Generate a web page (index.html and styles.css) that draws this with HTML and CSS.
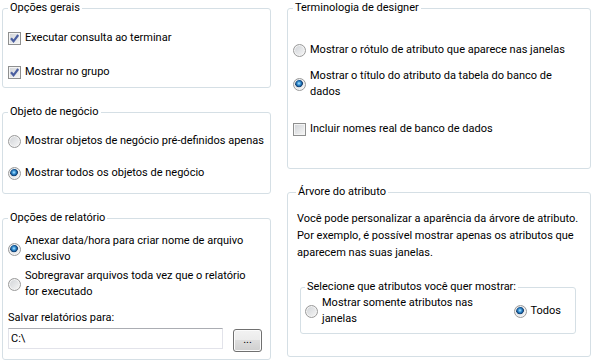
FILE: index.html
```html
<!DOCTYPE html>
<html lang="pt-BR">
<head>
    <meta charset="UTF-8">
    <title>Opções</title>
    <link rel="stylesheet" href="styles.css">
</head>
<body>

<div class="dialog">
    <div class="column">
        <fieldset class="group general">
            <legend>Opções gerais</legend>
            <label class="option first"><input type="checkbox" checked><span>Executar consulta ao terminar</span></label>
            <label class="option second"><input type="checkbox" checked><span>Mostrar no grupo</span></label>
        </fieldset>

        <fieldset class="group business">
            <legend>Objeto de negócio</legend>
            <label class="option first"><input type="radio" name="objetos"><span>Mostrar objetos de negócio pré-definidos apenas</span></label>
            <label class="option second"><input type="radio" name="objetos" checked><span>Mostrar todos os objetos de negócio</span></label>
        </fieldset>

        <fieldset class="group report">
            <legend>Opções de relatório</legend>
            <label class="option wrap first"><input type="radio" name="relatorio" checked><span>Anexar data/hora para criar nome de arquivo exclusivo</span></label>
            <label class="option wrap second"><input type="radio" name="relatorio"><span>Sobregravar arquivos toda vez que o relatório for executado</span></label>
            <div class="save-label">Salvar relatórios para:</div>
            <div class="path-row">
                <input type="text" class="path" value="C:\">
                <button class="browse">...</button>
            </div>
        </fieldset>
    </div>

    <div class="column">
        <fieldset class="group terms">
            <legend>Terminologia de designer</legend>
            <label class="option first"><input type="radio" name="termos"><span>Mostrar o rótulo de atributo que aparece nas janelas</span></label>
            <label class="option wrap second"><input type="radio" name="termos" checked><span>Mostrar o título do atributo da tabela do banco de dados</span></label>
            <label class="option third"><input type="checkbox"><span>Incluir nomes real de banco de dados</span></label>
        </fieldset>

        <fieldset class="group tree">
            <legend>Árvore do atributo</legend>
            <p class="note">Você pode personalizar a aparência da árvore de atributo. Por exemplo, é possível mostrar apenas os atributos que aparecem nas suas janelas.</p>
            <fieldset class="group inner">
                <legend>Selecione que atributos você quer mostrar:</legend>
                <div class="choice-row">
                    <label class="option wrap narrow"><input type="radio" name="arvore"><span>Mostrar somente atributos nas janelas</span></label>
                    <label class="option all"><input type="radio" name="arvore" checked><span>Todos</span></label>
                </div>
            </fieldset>
        </fieldset>
    </div>
</div>

</body>
</html>
```

FILE: styles.css
```css
body {
    margin: 0;
    background: #fff;
    color: #000;
    font-family: Roboto, "Open Sans", sans-serif;
    font-size: 11px;
    line-height: 16px;
}
.dialog {
    display: grid;
    grid-template-columns: 269px 304px;
    column-gap: 16px;
    padding: 0 0 0 2px;
}
.column { display: flex; flex-direction: column; }

.group {
    margin: 0;
    min-width: 0;
    padding: 0 7px 7px 5px;
    border: 1px solid #d5dfe5;
    border-radius: 3px;
}
.group legend { padding: 0 2px; }

.option {
    display: flex;
    align-items: center;
    gap: 4px;
    white-space: nowrap;
}
.option.wrap { white-space: normal; }
input[type="checkbox"], input[type="radio"] {
    appearance: none;
    flex: none;
    width: 13px;
    height: 13px;
    margin: 0;
    border: 1px solid #8e8f8f;
    background: linear-gradient(135deg, #cfd2d6, #f7f7f7);
    box-shadow: inset 0 0 0 1px #f4f4f4;
}
input[type="radio"] {
    border-color: #9a9a9a;
    border-radius: 50%;
}
input[type="radio"]:checked {
    background:
        radial-gradient(circle at 45% 40%, #bfe9ff 0, #4ba3e0 1.4px, #0e5596 3px, #1d3f6a 3.6px, rgba(29,63,106,0) 4.2px),
        linear-gradient(135deg, #cfd2d6, #f7f7f7);
}
input[type="checkbox"]:checked {
    background:
        url("data:image/svg+xml,%3Csvg xmlns='http://www.w3.org/2000/svg' width='11' height='11'%3E%3Cpath d='M2 5.3 L4.5 8.3 L9.2 2' fill='none' stroke='%234a5ea0' stroke-width='2.2'/%3E%3C/svg%3E") center no-repeat,
        linear-gradient(135deg, #cfd2d6, #f7f7f7);
}

/* Opções gerais */
.general { padding-top: 14px; }
.general .second { margin-top: 18px; }

/* Objeto de negócio */
.business { margin-top: 16px; padding-top: 13px; padding-bottom: 12px; }
.business .second { margin-top: 16px; }

/* Opções de relatório */
.report { margin-top: 16px; padding-top: 7px; padding-bottom: 7px; }
.report .wrap span { max-width: 224px; }
.report .second { margin-top: 3px; }
.save-label { margin-top: 10px; }
.path-row {
    display: flex;
    align-items: flex-start;
    gap: 10px;
    margin-top: 2px;
}
.path {
    width: 215px;
    height: 21px;
    box-sizing: border-box;
    margin: 0;
    padding: 0 2px;
    border: 1px solid #e2e3ea;
    border-top-color: #abadb3;
    font: inherit;
    color: #000;
    outline: none;
}
.browse {
    width: 29px;
    height: 23px;
    margin-top: 1px;
    padding: 0 0 2px;
    border: 1px solid #707070;
    border-radius: 3px;
    background: linear-gradient(#f2f2f2 0%, #ebebeb 50%, #dddddd 50%, #cfcfcf 100%);
    box-shadow: inset 0 0 0 1px #fbfbfb;
    font: inherit;
    color: #000;
}

/* Terminologia de designer */
.terms { padding-top: 26px; padding-bottom: 31px; }
.terms .second { margin-top: 10px; }
.terms .third { margin-top: 21px; }

/* Árvore do atributo */
.tree { margin-top: 15px; padding-left: 8px; padding-bottom: 22px; }
.note { margin: 10px 0 0 1px; line-height: 17px; }
.inner { margin: 18px 7px 0 4px; padding: 0 14px 6px 4px; }
.choice-row { display: flex; align-items: center; }
.narrow { width: 174px; }
.all { margin-left: auto; }
```
